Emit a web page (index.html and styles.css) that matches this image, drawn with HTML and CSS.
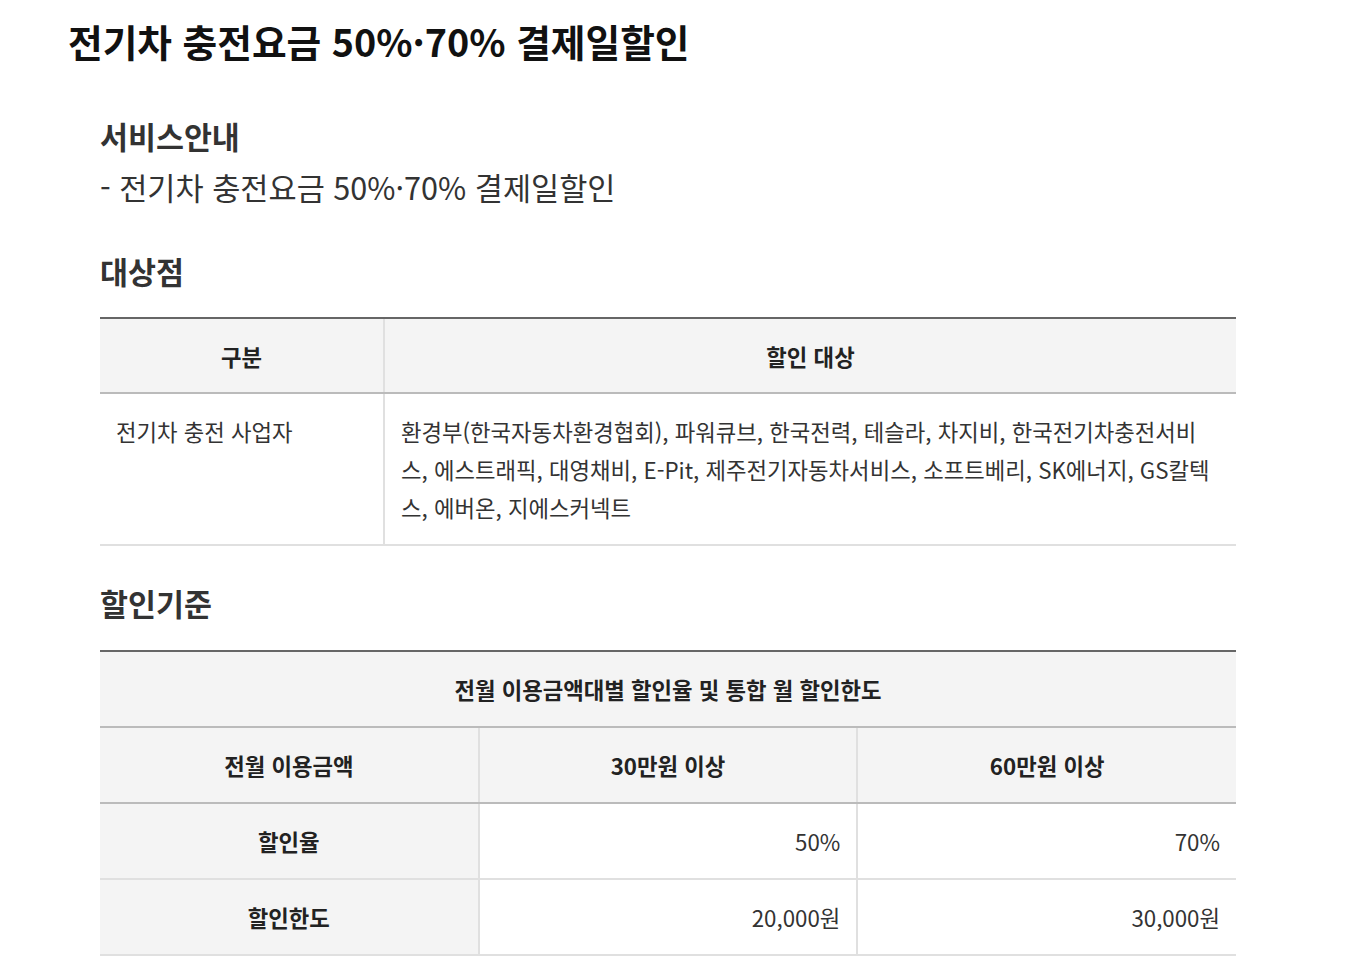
FILE: index.html
```html
<!DOCTYPE html>
<html lang="ko">
<head>
<meta charset="utf-8">
<title>전기차 충전요금 50%·70% 결제일할인</title>
<link rel="stylesheet" href="styles.css">
</head>
<body>
<main class="page">
  <h1 class="page-title">전기차 충전요금 50%·70% 결제일할인</h1>

  <section class="section section-intro">
    <h2 class="section-title">서비스안내</h2>
    <p class="desc">- 전기차 충전요금 50%·70% 결제일할인</p>
  </section>

  <section class="section section-target">
    <h2 class="section-title">대상점</h2>
    <table class="tbl tbl-target">
      <colgroup>
        <col class="col-kind">
        <col>
      </colgroup>
      <thead>
        <tr>
          <th>구분</th>
          <th>할인 대상</th>
        </tr>
      </thead>
      <tbody>
        <tr>
          <td>전기차 충전 사업자</td>
          <td>환경부(한국자동차환경협회), 파워큐브, 한국전력, 테슬라, 차지비, 한국전기차충전서비스, 에스트래픽, 대영채비, E-Pit, 제주전기자동차서비스, 소프트베리, SK에너지, GS칼텍스, 에버온, 지에스커넥트</td>
        </tr>
      </tbody>
    </table>
  </section>

  <section class="section section-rate">
    <h2 class="section-title">할인기준</h2>
    <table class="tbl tbl-rate">
      <colgroup>
        <col class="col-third">
        <col class="col-third">
        <col class="col-third">
      </colgroup>
      <thead>
        <tr>
          <th colspan="3">전월 이용금액대별 할인율 및 통합 월 할인한도</th>
        </tr>
        <tr class="sub-head">
          <th>전월 이용금액</th>
          <th>30만원 이상</th>
          <th>60만원 이상</th>
        </tr>
      </thead>
      <tbody>
        <tr>
          <th>할인율</th>
          <td class="num">50%</td>
          <td class="num">70%</td>
        </tr>
        <tr>
          <th>할인한도</th>
          <td class="num">20,000원</td>
          <td class="num">30,000원</td>
        </tr>
      </tbody>
    </table>
  </section>
</main>
</body>
</html>
```

FILE: styles.css
```css
* {
  box-sizing: border-box;
}

html, body {
  margin: 0;
  padding: 0;
  background: #ffffff;
}

body {
  font-family: "Noto Sans CJK KR", "Noto Sans", "Liberation Sans", sans-serif;
  color: #333333;
}

.page {
  padding: 17px 0 0 68px;
  width: 1236px;
}

.page-title {
  margin: 0;
  font-size: 37.7px;
  line-height: 48px;
  font-weight: 700;
  color: #111111;
}

.section {
  margin-left: 32px;
}

.section-intro {
  margin-top: 50px;
}

.section-target {
  margin-top: 42px;
}

.section-rate {
  margin-top: 36px;
}

.section-title {
  margin: 0;
  font-size: 30.4px;
  line-height: 42px;
  font-weight: 700;
  color: #333333;
}

.desc {
  margin: 9px 0 0;
  font-size: 30.6px;
  line-height: 42px;
  color: #333333;
}

.tbl {
  width: 1136px;
  margin-top: 25px;
  border-collapse: collapse;
  table-layout: fixed;
  font-size: 22.3px;
  line-height: 38px;
}

.section-rate .tbl {
  margin-top: 26px;
}

.tbl th,
.tbl td {
  padding: 18px 16px;
  vertical-align: middle;
}

.tbl-target thead th {
  padding-top: 17.5px;
  padding-bottom: 17.5px;
}

.tbl-target td {
  vertical-align: top;
}

.tbl th {
  background: #f4f4f4;
  font-weight: 700;
  color: #222222;
  text-align: center;
}

.tbl td {
  color: #333333;
  text-align: left;
}

.tbl thead tr:first-child th {
  border-top: 2px solid #666666;
}

.tbl thead tr th {
  border-bottom: 2px solid #bbbbbb;
}

.tbl tbody tr th,
.tbl tbody tr td {
  border-bottom: 2px solid #e0e0e0;
}

.tbl th + th,
.tbl th + td,
.tbl td + td {
  border-left: 2px solid #e0e0e0;
}

.col-kind {
  width: 284px;
}

.col-third {
  width: 33.333%;
}

.tbl-rate .num {
  text-align: right;
}
```
